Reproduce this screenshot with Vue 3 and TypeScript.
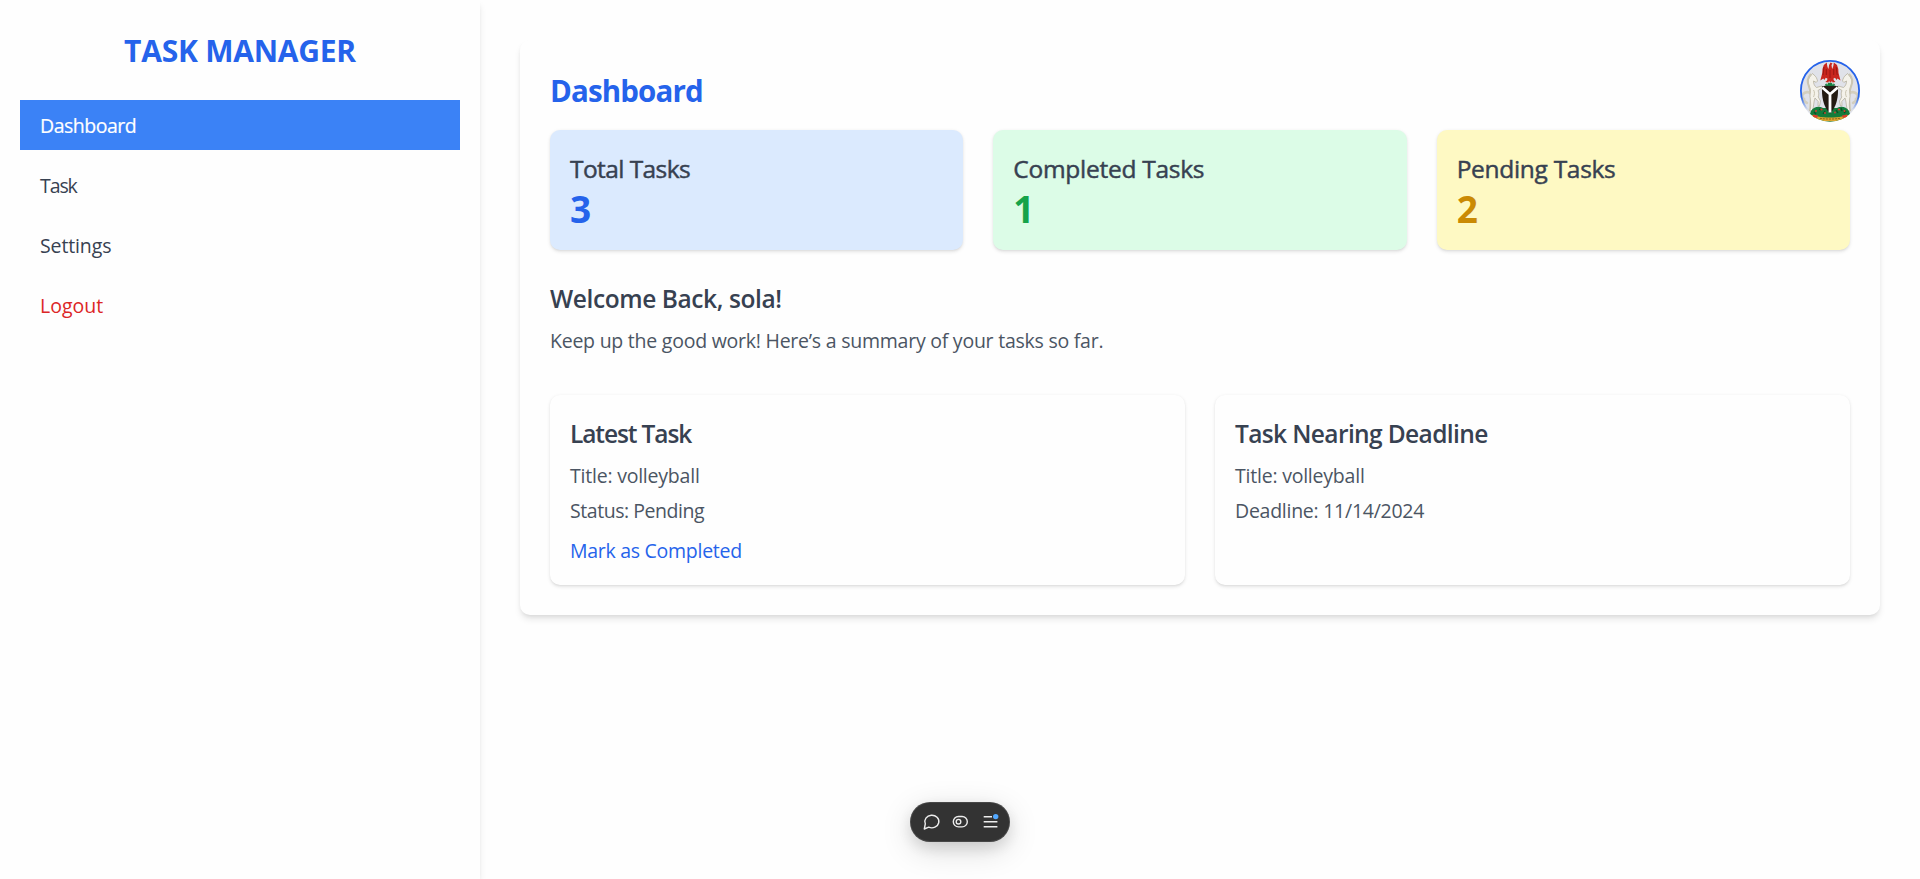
<script setup lang="ts">
import { ref } from 'vue'

interface NavItem { id: string; label: string }
interface Stat { id: string; label: string; value: number }

const nav: NavItem[] = [
  { id: 'dashboard', label: 'Dashboard' },
  { id: 'tasks', label: 'Task' },
  { id: 'settings', label: 'Settings' },
  { id: 'logout', label: 'Logout' },
]
const active = ref('dashboard')

const stats: Stat[] = [
  { id: 'total', label: 'Total Tasks', value: 3 },
  { id: 'completed', label: 'Completed Tasks', value: 1 },
  { id: 'pending', label: 'Pending Tasks', value: 2 },
]
</script>

<template>
  <div class="layout">
    <aside class="sidebar">
      <h1 class="brand">TASK MANAGER</h1>
      <nav class="nav">
        <a
          v-for="item in nav"
          :key="item.id"
          class="nav-item"
          :class="['to-' + item.id, { active: active === item.id }]"
          @click="active = item.id"
        >{{ item.label }}</a>
      </nav>
    </aside>

    <main class="main">
      <section class="panel">
        <svg class="avatar" viewBox="0 0 60 61.7" preserveAspectRatio="none">
          <defs>
            <clipPath id="round"><ellipse cx="30" cy="30.85" rx="30" ry="30.85" /></clipPath>
            <linearGradient id="ring" x1="0" y1="0" x2="0" y2="1">
              <stop offset="0.6" stop-color="#2563eb" />
              <stop offset="0.82" stop-color="#2563eb" stop-opacity="0" />
            </linearGradient>
          </defs>
          <g clip-path="url(#round)">
            <rect width="60" height="62" fill="#e0e2e9" />
            <!-- left horse, mirrored for the right one -->
            <g id="horse">
              <path d="M11 34c-2-3-6-2-8 0-1.500 2-.5 4 1 5-.5 2 1 3 3 4M13 36c-3 3-2 8-3 14" fill="none" stroke="#d3cfbf" stroke-width="2.600" stroke-linecap="round" />
              <path d="M12.500 13.500l1.500 1.500c2 1.500 3 3.500 3.500 6l-1.300 1.400-2.700-1.400c0 3 1 5 3 6.500l5.500-1.500.6 1.700-4.600 2.800c1 2.500 1 4 .2 6.500l2.300 4-1 5-1.500-.2.200-4.300-3.200-3.500c-1.500 4-1 8-2.600 13H9.800c1.500-4 .7-8 .5-12-.8-4 .2-6 .2-9-2.500-5-3-9-1.500-12z" fill="#f4f2ea" stroke="#b0ab97" stroke-width=".7" />
              <path d="M11 14c-3 3-4 8-2 12.500 1 3 1.500 4 1 6" fill="none" stroke="#cbc6b3" stroke-width="2" />
              <path d="M13.500 30c1.500 2 1 5 0 7" fill="none" stroke="#c9c4b0" stroke-width="1" />
            </g>
            <use href="#horse" transform="translate(60 0) scale(-1 1)" />
            <!-- flower bed -->
            <path d="M11 51c3-4.500 8-5 12-3h14c4-2 9-1.500 12 3l2 6-8 6H17l-8-6z" fill="#147c3b" />
            <path d="M14 52l2 2M19 49l2 1M25 51l-2 3M36 50l2 3M41 48l1 3M46 51l-2 2" stroke="#0b4e24" stroke-width="1.300" />
            <g fill="#d63b2e">
              <circle cx="16" cy="51" r="1" /><circle cx="21.500" cy="49.500" r="1.100" /><circle cx="25" cy="53" r=".9" />
              <circle cx="35" cy="52.500" r=".9" /><circle cx="39" cy="49.500" r="1.100" /><circle cx="44.500" cy="51" r="1" />
            </g>
            <!-- shield and wreath -->
            <path d="M22 26.500c5-1.600 11-1.600 16 0 .4 10-1 20-8 27-7-7-8.400-17-8-27z" fill="#231a12" />
            <path d="M22.300 27.500L30 34.200l7.700-6.700M30 34v18.500" fill="none" stroke="#fff" stroke-width="2.800" />
            <path d="M25 24.500c2-2.400 8-2.400 10 0l-1 1.500h-8z" fill="#168042" />
            <path d="M26.500 23.800h1.500M32 23.800h1.500" stroke="#e5eee5" />
            <!-- eagle -->
            <path d="M30.500 2.500l2 1-1 1.500.6 4c1-1.500 1.500-3.500 1.700-6.500l3.200 2.500 1.300 4 .2 4 2 7.500-3-2-1 1.500-1.500-2.200-1.700 1 .7 1.700 1.500 1.500-3 .5-.5-1.500-1.500 1.700-1.500-1.700-.7 1.500-3-.5 1.700-1.500.5-1.700-1.700-1-1.500 2.200-1-1.500-3 2 2-7.500.2-4 1.300-4 3-2.500c.2 3 .7 5 1.700 6.500l.6-4z" fill="#c9261f" />
            <path d="M24 7l-1 8M26.300 9v6M33.700 9v6M36.200 7l1 8M30 10v8" stroke="#86120f" stroke-width=".7" />
            <!-- banner -->
            <path d="M12 55l6 1.500c7 1.500 17 1.500 24 0l6-1.500v3l-6 2.500c-8 1-16 1-24 0L12 58z" fill="#dca52e" />
            <path d="M13 54.500l5 1-1 2.500-4-1zM47 54.500l-5 1 1 2.500 4-1z" fill="#db3c2c" />
            <path d="M20 58.300c6 1 14 1 20 0" fill="none" stroke="#8c641d" stroke-dasharray="2 1" />
          </g>
          <ellipse cx="30" cy="30.85" rx="29.100" ry="29.950" fill="none" stroke="url(#ring)" stroke-width="1.800" />
        </svg>

        <h2 class="title">Dashboard</h2>

        <div class="stats">
          <div v-for="s in stats" :key="s.id" class="stat" :class="s.id">
            <h3 class="stat-label">{{ s.label }}</h3>
            <p class="stat-value">{{ s.value }}</p>
          </div>
        </div>

        <div class="welcome">
          <h3 class="heading greeting">Welcome Back, sola!</h3>
          <p class="text summary">Keep up the good work! Here’s a summary of your tasks so far.</p>
        </div>

        <div class="cards">
          <article class="card">
            <h3 class="heading latest">Latest Task</h3>
            <p class="text">Title: volleyball</p>
            <p class="text status">Status: Pending</p>
            <button class="complete" type="button">Mark as Completed</button>
          </article>
          <article class="card">
            <h3 class="heading nearing">Task Nearing Deadline</h3>
            <p class="text">Title: volleyball</p>
            <p class="text due">Deadline: 11/14/2024</p>
          </article>
        </div>
      </section>
    </main>

    <div class="toolbar">
      <svg width="100" height="40" viewBox="0 0 100 40" fill="none" stroke="#ededed" stroke-width="1.400">
        <path d="M14.300 27l1-5.200a7 6.300 0 1 1 3.400 3.400z" stroke-linejoin="round" />
        <rect x="43.300" y="14.500" width="14" height="10.400" rx="5.200" />
        <circle cx="48.500" cy="19.700" r="2.300" />
        <path d="M73.700 14.700H82M73.700 19.700H87.400M73.700 24.700H87.400" stroke-width="1.600" />
        <circle cx="85.700" cy="14.600" r="2.700" fill="#52a8ff" stroke="none" />
      </svg>
    </div>
  </div>
</template>

<style>
body {
  margin: 0;
  background: #fefefe;
}
</style>

<style scoped>
.layout {
  display: flex;
  height: 100vh;
  overflow: hidden;
  font-family: "Open Sans", "Noto Sans", sans-serif;
  font-size: 19.5px;
  line-height: 30px;
  color: #374151;
}
h1, h2, h3, p { margin: 0; }

.sidebar {
  box-sizing: border-box;
  width: 480px;
  flex: none;
  padding: 31px 20px 20px;
  background: #fefefe;
  box-shadow: 0 5px 7.5px -1.25px rgba(0, 0, 0, 0.1), 0 2.5px 5px -2.5px rgba(0, 0, 0, 0.1);
}
.brand {
  height: 69px;
  text-align: center;
  font-size: 30px;
  font-weight: 700;
  line-height: 40px;
  letter-spacing: -0.24px;
  color: #2563eb;
}
.nav {
  display: flex;
  flex-direction: column;
  gap: 10px;
}
.nav-item {
  padding: 11px 20px 9px;
  cursor: pointer;
}
.to-dashboard { letter-spacing: -0.48px; }
.to-tasks { letter-spacing: -1.1px; }
.to-settings { letter-spacing: -0.12px; }
.to-logout { color: #dc2626; }
.nav-item.active {
  background: #3b82f6;
  color: #fff;
  -webkit-text-stroke: 0.2px currentColor;
}

.main {
  flex: 1;
  padding: 40px;
}
.panel {
  position: relative;
  padding: 30px;
  border-radius: 10px;
  background: #fefefe;
  box-shadow: 0 5px 7.5px -1.25px rgba(0, 0, 0, 0.1), 0 2.5px 5px -2.5px rgba(0, 0, 0, 0.1);
}
.avatar {
  position: absolute;
  top: 20px;
  right: 20px;
  width: 60px;
  height: 61.7px;
}
.title {
  padding-top: 1px;
  margin-bottom: 19px;
  font-size: 29.5px;
  font-weight: 700;
  line-height: 40px;
  letter-spacing: -0.85px;
  color: #2563eb;
}
.stats {
  display: grid;
  grid-template-columns: repeat(3, 1fr);
  gap: 30px;
}
.stat {
  box-sizing: border-box;
  height: 120px;
  padding: 21px 20px 19px;
  border-radius: 10px;
  box-shadow: 0 1.25px 3.75px rgba(0, 0, 0, 0.1), 0 1.25px 2.5px -1.25px rgba(0, 0, 0, 0.1);
}
.stat-label {
  font-size: 24.5px;
  font-weight: 400;
  line-height: 35px;
  -webkit-text-stroke: 0.45px currentColor;
}
.stat-value {
  font-size: 37px;
  font-weight: 700;
  line-height: 45px;
}
.stat.total { background: #dbeafe; }
.stat.completed { background: #dcfce7; }
.stat.pending { background: #fef9c3; }
.total .stat-label { letter-spacing: -0.58px; }
.completed .stat-label { letter-spacing: -0.27px; }
.pending .stat-label { letter-spacing: -0.3px; }
.total .stat-value { color: #2563eb; }
.completed .stat-value { color: #16a34a; }
.pending .stat-value { color: #ca8a04; }

.welcome {
  box-sizing: border-box;
  height: 145px;
  padding-top: 31px;
}
.heading {
  margin-bottom: 10px;
  font-size: 24.5px;
  font-weight: 600;
  line-height: 35px;
}
.greeting { letter-spacing: -0.41px; }
.latest { letter-spacing: -1.1px; }
.nearing { letter-spacing: -0.62px; }
.text {
  color: #4b5563;
  letter-spacing: -0.22px;
}
.summary { letter-spacing: -0.24px; }

.cards {
  display: grid;
  grid-template-columns: repeat(2, 1fr);
  gap: 30px;
}
.card {
  box-sizing: border-box;
  height: 190px;
  padding: 21px 20px 19px;
  border-radius: 10px;
  background: #fefefe;
  box-shadow: 0 1.25px 3.75px rgba(0, 0, 0, 0.1), 0 1.25px 2.5px -1.25px rgba(0, 0, 0, 0.1);
}
.card p + p { margin-top: 5px; }
.status { letter-spacing: -0.45px; }
.due { letter-spacing: -0.26px; }
.complete {
  display: block;
  margin: 10px 0 0;
  padding: 0;
  border: 0;
  background: none;
  font: inherit;
  letter-spacing: -0.28px;
  color: #2563eb;
  cursor: pointer;
}

.toolbar {
  position: fixed;
  bottom: 37.500px;
  left: 50%;
  width: 100px;
  height: 40px;
  transform: translateX(-50%);
  border-radius: 20px;
  background: #333;
  box-shadow: inset 0 0 0 1px rgba(255, 255, 255, 0.1), 0 6px 16px rgba(0, 0, 0, 0.12), 0 8px 32px rgba(0, 0, 0, 0.14);
}
.toolbar svg { display: block; }
</style>
